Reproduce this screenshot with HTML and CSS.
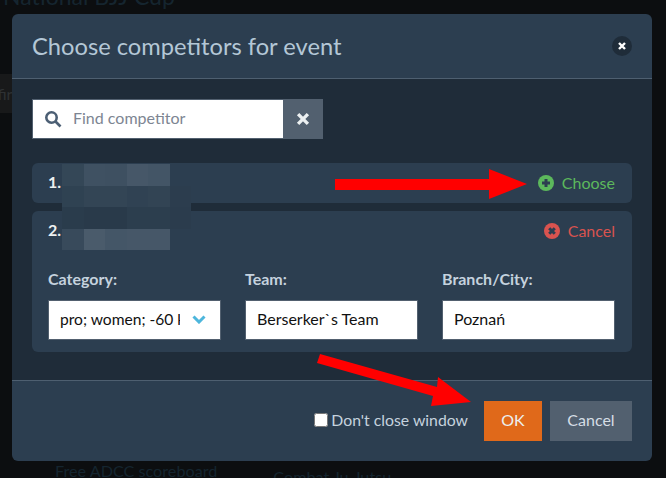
FILE: index.html
```html
<!DOCTYPE html>
<html lang="en">
    <head>
        <meta charset="UTF-8">
        <meta name="viewport" content="width=device-width, initial-scale=1.0">
        <title>Choose competitors for event</title>
        <link rel="stylesheet" href="styles.css">
    </head>
    <body>
        <div class="page">
            <h1 class="page-title">National BJJ Cup</h1>
            <div class="page-chip">Confirm</div>
            <div class="page-links">
                <a class="page-link">Free ADCC scoreboard</a>
                <a class="page-link page-link-low">Combat Ju-Jutsu</a>
            </div>
        </div>

        <div class="modal">
            <div class="modal-header">
                <h2 class="modal-title">Choose competitors for event</h2>
                <button class="modal-close" aria-label="Close">
                    <svg class="icon-x" viewBox="0 0 10 10"><path d="M2 2l6 6M8 2l-6 6"/></svg>
                </button>
            </div>

            <div class="modal-body">
                <div class="search">
                    <label class="search-box">
                        <svg class="search-icon" viewBox="0 0 18 18"><circle cx="7.5" cy="7.5" r="5.2"/><path d="M11.5 11.5l5 5"/></svg>
                        <input class="search-input" type="text" placeholder="Find competitor">
                    </label>
                    <button class="search-clear" aria-label="Clear">
                        <svg class="icon-x" viewBox="0 0 10 10"><path d="M1.5 1.500l7 7M8.500 1.500l-7 7"/></svg>
                    </button>
                </div>

                <div class="competitor">
                    <div class="competitor-row">
                        <span class="competitor-num">1.</span>
                        <a class="action action-choose">
                            <svg class="action-icon" viewBox="0 0 16 16"><circle cx="8" cy="8" r="8"/><path d="M8 4v8M4 8h8"/></svg>
                            Choose
                        </a>
                    </div>
                </div>

                <div class="competitor">
                    <div class="competitor-row">
                        <span class="competitor-num">2.</span>
                        <a class="action action-cancel">
                            <svg class="action-icon" viewBox="0 0 16 16"><circle cx="8" cy="8" r="8"/><path d="M5.200 5.200l5.600 5.600M10.800 5.200l-5.600 5.600"/></svg>
                            Cancel
                        </a>
                    </div>
                    <div class="fields">
                        <div class="field">
                            <label class="field-label">Category:</label>
                            <div class="select-wrap">
                                <select class="field-input field-select">
                                    <option>pro; women; -60 kg</option>
                                </select>
                                <svg class="select-arrow" viewBox="0 0 14 9"><path d="M1.500 1.500L7 7l5.500-5.500"/></svg>
                            </div>
                        </div>
                        <div class="field">
                            <label class="field-label">Team:</label>
                            <input class="field-input" type="text" value="Berserker`s Team">
                        </div>
                        <div class="field">
                            <label class="field-label">Branch/City:</label>
                            <input class="field-input" type="text" value="Poznań">
                        </div>
                    </div>
                </div>
            </div>

            <div class="modal-footer">
                <label class="keep-open"><input class="keep-check" type="checkbox">Don't close window</label>
                <button class="btn btn-ok">OK</button>
                <button class="btn btn-cancel">Cancel</button>
            </div>
        </div>

        <!-- names are pixelated out in the screenshot -->
        <div class="pixels">
            <i></i><i></i><i></i><i></i><i></i><i></i>
            <i></i><i></i><i></i><i></i><i></i><i></i>
            <i></i><i></i><i></i><i></i><i></i><i></i>
            <i></i><i></i><i></i><i></i><i></i><i></i>
        </div>

        <svg class="arrows" viewBox="0 0 666 478">
            <polygon points="335,179 489,179 489,169 527,184 489,199 489,190 335,190"/>
            <polygon points="320,354 437,387 438,377 471,402 431,406 433,396 317,363"/>
        </svg>
    </body>
</html>
```

FILE: styles.css
```css
* {
    box-sizing: border-box;
}
body {
    margin: 0;
    height: 478px;
    overflow: hidden;
    font-family: "Lato", sans-serif;
    font-size: 16px;
    background-color: #0c0e10;
}

/* page behind the modal */
.page {
    height: 478px;
    overflow: hidden;
    color: #15252f;
}
.page-title {
    margin: -18px 0 0 3px;
    font-size: 23px;
    font-weight: 400;
    line-height: 29px;
}
.page-chip {
    width: 60px;
    height: 39px;
    margin: 63px 0 0 -31px;
    background-color: #18191a;
    color: #2e3133;
    font-size: 16px;
    line-height: 39px;
}
.page-links {
    display: flex;
    gap: 56px;
    margin: 348px 0 0 55px;
    font-size: 16.2px;
}
.page-link-low {
    margin-top: 6px;
}

/* modal */
.modal {
    position: absolute;
    left: 12px;
    top: 14px;
    width: 640px;
    height: 447px;
    display: flex;
    flex-direction: column;
    border-radius: 6px;
    overflow: hidden;
    background-color: #2c3e50;
}
.modal-header {
    height: 65px;
    display: flex;
    align-items: center;
    justify-content: space-between;
    padding: 0 20px;
    border-bottom: 1px solid #4e5f70;
}
.modal-title {
    margin: 0;
    font-size: 23.7px;
    font-weight: 400;
    color: #b4c7d6;
}
.modal-close {
    width: 20px;
    height: 20px;
    padding: 5px;
    border: none;
    border-radius: 50%;
    background-color: #1f2c39;
    color: white;
}
.icon-x {
    display: block;
    width: 100%;
    height: 100%;
    fill: none;
    stroke: currentColor;
    stroke-width: 2.4;
}
.modal-body {
    flex: 1;
    padding: 20px;
    background-color: #1f2c39;
}

/* search */
.search {
    display: flex;
    width: 291px;
    height: 40px;
    margin-bottom: 24px;
}
.search-box {
    flex: 1;
    display: flex;
    align-items: center;
    gap: 11px;
    padding-left: 11px;
    border: 1px solid #52606f;
    border-right: none;
    background: white;
}
.search-icon {
    width: 18px;
    height: 18px;
    flex: none;
    fill: none;
    stroke: #4c5f74;
    stroke-width: 2.6;
}
.search-input {
    flex: 1;
    min-width: 0;
    height: 100%;
    border: none;
    outline: none;
    padding: 0 0 3px;
    font-family: inherit;
    font-size: 16px;
}
.search-input::placeholder {
    color: #7d8592;
    opacity: 1;
}
.search-clear {
    width: 40px;
    padding: 13px;
    border: none;
    background-color: #52606f;
    color: #ecf0f1;
}

/* competitors */
.competitor {
    margin-bottom: 8px;
    padding: 0 16px;
    border-radius: 6px;
    background-color: #2c3e50;
}
.competitor-row {
    height: 40px;
    display: flex;
    align-items: center;
    justify-content: space-between;
    padding-bottom: 2px;
}
.competitor-num {
    margin-bottom: 2px;
    font-weight: 700;
    color: #ecf0f1;
}
.action {
    display: flex;
    align-items: center;
    gap: 8px;
    margin-right: 1px;
}
.action-icon {
    flex: none;
    display: block;
    width: 16px;
    height: 16px;
    margin-top: 2px;
}
.action-icon path {
    fill: none;
    stroke: #2c3e50;
    stroke-width: 3;
}
.action-choose {
    color: #5cb85c;
    fill: #5cb85c;
}
.action-cancel {
    color: #d9534f;
    fill: #d9534f;
}
.fields {
    display: grid;
    grid-template-columns: repeat(3, 173px);
    gap: 24px;
    padding-top: 18px;
    padding-bottom: 12px;
}
.field-label {
    display: block;
    margin-bottom: 12px;
    font-weight: 700;
    line-height: 19px;
    color: #c5d2de;
}
.field-input {
    display: block;
    width: 100%;
    height: 40px;
    padding: 0 11px 3px;
    border: 1px solid #52606f;
    border-radius: 0;
    outline: none;
    background: white;
    font-family: inherit;
    font-size: 16px;
    color: #111;
}
.select-wrap {
    position: relative;
}
.field-select {
    appearance: none;
    padding-right: 40px;
    font-size: 15.6px;
}
.select-arrow {
    position: absolute;
    right: 15px;
    top: 15px;
    width: 14px;
    height: 9px;
    fill: none;
    stroke: #4db6dc;
    stroke-width: 3;
}

/* footer */
.modal-footer {
    height: 81px;
    display: flex;
    align-items: center;
    justify-content: flex-end;
    gap: 8px;
    padding: 0 20px;
    border-top: 1px solid #4e5f70;
}
.keep-open {
    display: flex;
    align-items: center;
    gap: 3px;
    margin-right: 8px;
    padding-bottom: 4px;
    font-size: 15.8px;
    color: #c5d2de;
}
.keep-check {
    width: 14px;
    height: 14px;
    margin: 2px 0 0;
}
.btn {
    height: 40px;
    padding: 0 0 4px;
    border: none;
    font-family: inherit;
    font-size: 16px;
}
.btn-ok {
    width: 58px;
    background-color: #e0691a;
    color: #ecf0f1;
}
.btn-cancel {
    width: 82px;
    background-color: #52606f;
    color: #d5dde5;
}

/* overlays */
.pixels {
    position: absolute;
    left: 62px;
    top: 164px;
    display: grid;
    grid-template-columns: repeat(6, 21.5px);
    grid-template-rows: repeat(4, 21.5px);
}
.pixels i:nth-child(1) { background-color: #344757; }
.pixels i:nth-child(2) { background-color: #3f5162; }
.pixels i:nth-child(3) { background-color: #3e5061; }
.pixels i:nth-child(4) { background-color: #465768; }
.pixels i:nth-child(5) { background-color: #435566; }
.pixels i:nth-child(7) { background-color: #2f4252; }
.pixels i:nth-child(8) { background-color: #334555; }
.pixels i:nth-child(9) { background-color: #334555; }
.pixels i:nth-child(10) { background-color: #304253; }
.pixels i:nth-child(11) { background-color: #324454; }
.pixels i:nth-child(12) { background-color: #2c3d4e; }
.pixels i:nth-child(13) { background-color: #2a3c4c; }
.pixels i:nth-child(14) { background-color: #293a4a; }
.pixels i:nth-child(15) { background-color: #293a4a; }
.pixels i:nth-child(16) { background-color: #2c3e4e; }
.pixels i:nth-child(17) { background-color: #2c3e4e; }
.pixels i:nth-child(18) { background-color: #2b3c4d; }
.pixels i:nth-child(19) { background-color: #384a5b; }
.pixels i:nth-child(20) { background-color: #4a5b6b; }
.pixels i:nth-child(21) { background-color: #445667; }
.pixels i:nth-child(22) { background-color: #465768; }
.pixels i:nth-child(23) { background-color: #465768; }
.arrows {
    position: absolute;
    left: 0;
    top: 0;
    width: 666px;
    height: 478px;
    fill: #ff0000;
}
```
